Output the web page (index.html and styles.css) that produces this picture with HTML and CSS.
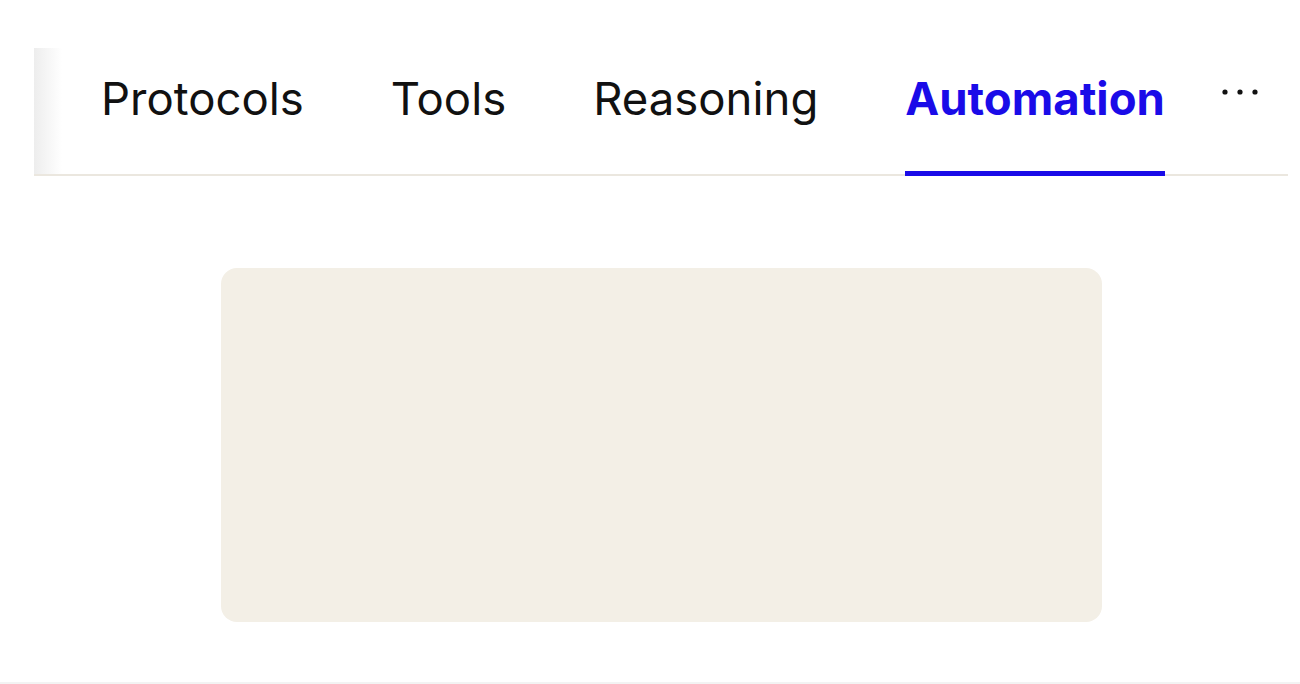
FILE: index.html
```html
<!DOCTYPE html>
<html lang="en">
<head>
<meta charset="utf-8">
<title>Tabs</title>
<link rel="stylesheet" href="styles.css">
</head>
<body>
<div class="page">
  <nav class="tabs">
    <div class="fade"></div>
    <div class="tab-list">
      <a class="tab">Protocols</a>
      <a class="tab">Tools</a>
      <a class="tab">Reasoning</a>
      <a class="tab active">Automation</a>
    </div>
    <span class="more" aria-label="More">
      <svg width="38" height="8" viewBox="0 0 38 8"><circle cx="4" cy="4" r="2.6" fill="#111"/><circle cx="19" cy="4" r="2.6" fill="#111"/><circle cx="34" cy="4" r="2.6" fill="#111"/></svg>
    </span>
  </nav>
  <div class="card"></div>
</div>
</body>
</html>
```
FILE: styles.css
```css
html, body {
  margin: 0;
  padding: 0;
  background: #ffffff;
}
body {
  font-family: Inter, "Noto Sans", sans-serif;
  color: #111111;
}
.page {
  width: 1300px;
  height: 684px;
  overflow: hidden;
  border-bottom: 2px solid #f3f3f3;
  box-sizing: border-box;
}
.tabs {
  position: relative;
  display: flex;
  align-items: stretch;
  margin: 48px 0 0 34px;
  width: 1254px;
  height: 128px;
  box-sizing: border-box;
  padding-left: 67px;
  border-bottom: 2px solid #ebe7df;
}
.fade {
  position: absolute;
  left: 0;
  top: 0;
  bottom: 0;
  width: 28px;
  background: linear-gradient(to right, #ededed, #ffffff);
}
.tab-list {
  display: flex;
  align-items: stretch;
  gap: 87px;
}
.tab {
  display: block;
  font-size: 45.5px;
  line-height: 52px;
  padding-top: 25px;
  color: #111111;
  position: relative;
}
.tab.active {
  color: #1a0be8;
  font-weight: 700;
}
.tab.active::after {
  content: "";
  position: absolute;
  left: 0;
  right: 0;
  bottom: -2px;
  height: 5px;
  background: #1a0be8;
}
.more {
  margin-left: auto;
  margin-right: 29px;
  padding-top: 40px;
  line-height: 0;
}
.card {
  margin: 92px 0 0 221px;
  width: 881px;
  height: 354px;
  border-radius: 16px;
  background: #f3efe6;
}
```
